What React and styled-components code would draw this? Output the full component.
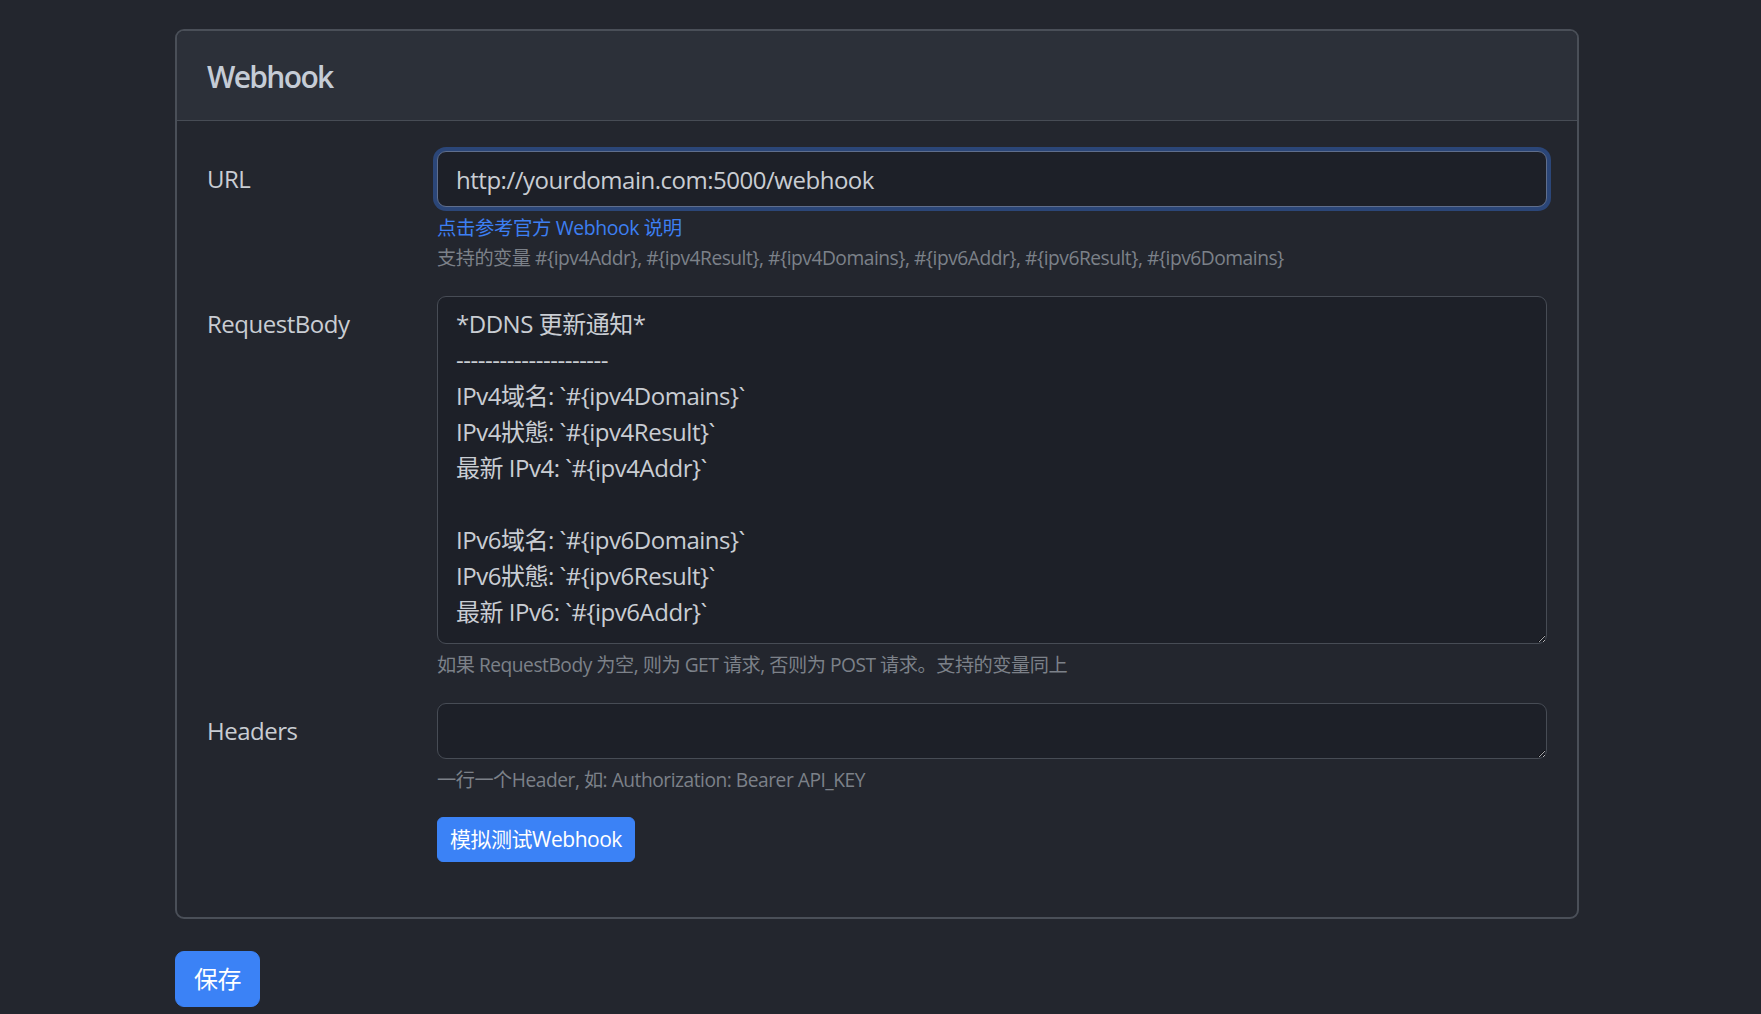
import React from "react";
import styled, { createGlobalStyle } from "styled-components";

const GlobalStyle = createGlobalStyle`
  html, body {
    margin: 0;
    padding: 0;
    background: #23262e;
  }
  body {
    font-family: "Open Sans", "Noto Sans CJK SC", sans-serif;
    letter-spacing: -0.03em;
    color: #c9cdd3;
    color-scheme: dark;
  }
  * { box-sizing: border-box; }
`;

const Page = styled.div`
  width: 1404px;
  margin: 29px 0 0 175px;
  padding-bottom: 40px;
`;

const Card = styled.section`
  border: 2px solid #4a4f58;
  border-radius: 9px;
  overflow: hidden;
`;

const CardHeader = styled.header`
  background: #2c3039;
  border-bottom: 1px solid #474c55;
  padding: 28px 30px 25px;
`;

const Title = styled.h5`
  margin: 0;
  font-size: 30px;
  line-height: 36px;
  font-weight: 600;
  letter-spacing: -0.055em;
  color: #c5ccd6;
`;

const CardBody = styled.div`
  padding: 30px 30px 1px;
`;

const Row = styled.div`
  display: grid;
  grid-template-columns: 230px 1fr;
  margin-bottom: ${(p) => p.$mb || 23}px;
`;

const Label = styled.label`
  font-size: 24px;
  line-height: 36px;
  padding-top: 10px;
  color: #c9cdd3;
`;

const Field = styled.div`
  display: flex;
  flex-direction: column;
  min-width: 0;
`;

const Input = styled.input`
  height: 56px;
  width: 100%;
  padding: 9px 18px;
  font: inherit;
  letter-spacing: inherit;
  font-size: 24px;
  line-height: 36px;
  color: #c9cdd3;
  background: #1d2028;
  border: 1px solid #5f6e8c;
  border-radius: 9px;
  outline: none;
  box-shadow: 0 0 0 4px #2b4678;
`;

const TextArea = styled.textarea`
  display: block;
  width: 100%;
  height: ${(p) => p.$h}px;
  padding: 9px 18px;
  font: inherit;
  letter-spacing: inherit;
  font-size: 24px;
  line-height: 36px;
  color: #c9cdd3;
  background: #1d2028;
  border: 1px solid #474c55;
  border-radius: 9px;
  outline: none;
  resize: vertical;
  color-scheme: dark;
`;

const HelpText = styled.div`
  margin-top: ${(p) => (p.$tight ? 0 : 6)}px;
  font-size: 19.2px;
  line-height: 30px;
  color: #7c8189;
`;

const Link = styled.a`
  margin-top: 6px;
  font-size: 19.4px;
  line-height: 30px;
  letter-spacing: -0.02em;
  color: #3d7ff2;
  text-decoration: none;
`;

const Button = styled.button`
  font-family: inherit;
  letter-spacing: inherit;
  color: #fff;
  background: #3b82f6;
  border: 1px solid #3b82f6;
  cursor: pointer;
  font-size: ${(p) => (p.$small ? 21 : 24)}px;
  line-height: ${(p) => (p.$small ? 31 : 36)}px;
  padding: ${(p) => (p.$small ? "6px 12px" : "9px 18px")};
  border-radius: ${(p) => (p.$small ? 6 : 9)}px;
`;

const SaveRow = styled.div`
  margin-top: 32px;
`;

const body = `*DDNS 更新通知*
---------------------
IPv4域名: \`#{ipv4Domains}\`
IPv4狀態: \`#{ipv4Result}\`
最新 IPv4: \`#{ipv4Addr}\`

IPv6域名: \`#{ipv6Domains}\`
IPv6狀態: \`#{ipv6Result}\`
最新 IPv6: \`#{ipv6Addr}\``;

export default function App() {
  return (
    <>
      <GlobalStyle />
      <Page>
        <Card>
          <CardHeader>
            <Title>Webhook</Title>
          </CardHeader>
          <CardBody>
            <Row>
              <Label>URL</Label>
              <Field>
                <Input defaultValue="http://yourdomain.com:5000/webhook" />
                <Link href="#">点击参考官方 Webhook 说明</Link>
                <HelpText $tight>
                  支持的变量 #{"{"}ipv4Addr{"}"}, #{"{"}ipv4Result{"}"}, #{"{"}ipv4Domains{"}"}, #{"{"}ipv6Addr{"}"}, #{"{"}ipv6Result{"}"}, #{"{"}ipv6Domains{"}"}
                </HelpText>
              </Field>
            </Row>
            <Row>
              <Label>RequestBody</Label>
              <Field>
                <TextArea $h={348} defaultValue={body} />
                <HelpText>如果 RequestBody 为空, 则为 GET 请求, 否则为 POST 请求。支持的变量同上</HelpText>
              </Field>
            </Row>
            <Row $mb={22}>
              <Label>Headers</Label>
              <Field>
                <TextArea $h={56} defaultValue="" />
                <HelpText>一行一个Header, 如: Authorization: Bearer API_KEY</HelpText>
              </Field>
            </Row>
            <Row $mb={54}>
              <div />
              <Field>
                <div>
                  <Button $small>模拟测试Webhook</Button>
                </div>
              </Field>
            </Row>
          </CardBody>
        </Card>
        <SaveRow>
          <Button>保存</Button>
        </SaveRow>
      </Page>
    </>
  );
}
